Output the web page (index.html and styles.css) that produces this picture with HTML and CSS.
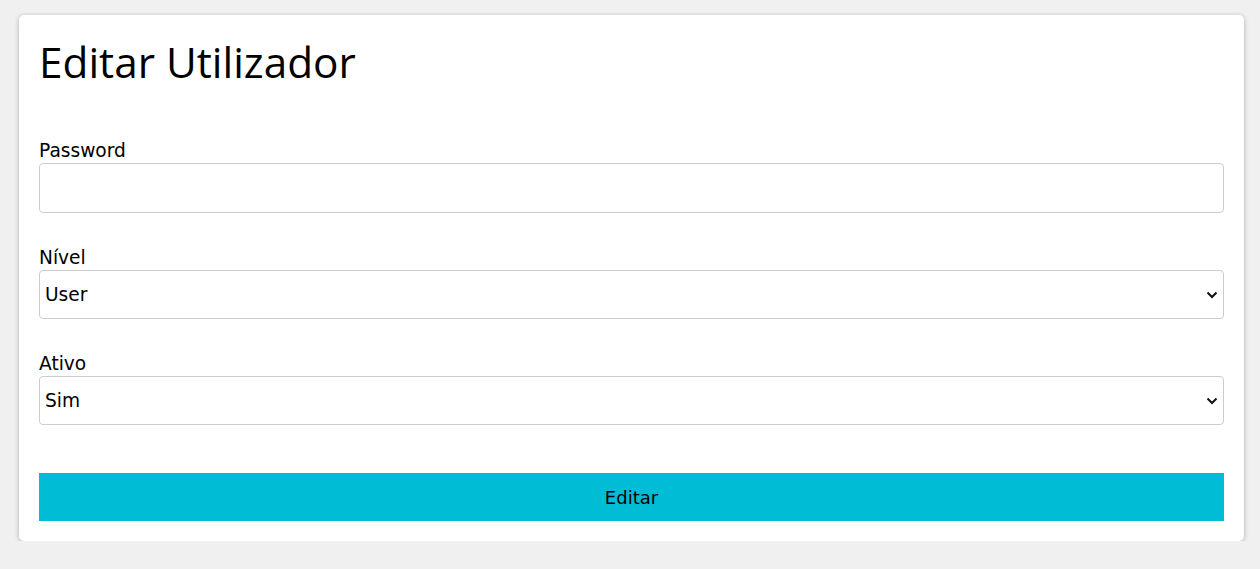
FILE: index.html
```html
<!DOCTYPE html>
<html lang="pt">
<head>
<meta charset="utf-8">
<title>Editar Utilizador</title>
<link rel="stylesheet" href="styles.css">
</head>
<body>
<main class="card">
  <h1 class="title">Editar Utilizador</h1>
  <form class="form">
    <div class="field">
      <label class="label" for="pw">Password</label>
      <input class="control" id="pw" type="password">
    </div>
    <div class="field">
      <label class="label" for="nivel">Nível</label>
      <div class="select-wrap">
        <select class="control select" id="nivel"><option>User</option><option>Admin</option></select>
        <svg class="chev" viewBox="0 0 12 8" width="12" height="8"><path d="M1.5 1.5 L6 6 L10.5 1.5" fill="none" stroke="#111" stroke-width="2"/></svg>
      </div>
    </div>
    <div class="field">
      <label class="label" for="ativo">Ativo</label>
      <div class="select-wrap">
        <select class="control select" id="ativo"><option>Sim</option><option>Não</option></select>
        <svg class="chev" viewBox="0 0 12 8" width="12" height="8"><path d="M1.5 1.5 L6 6 L10.5 1.5" fill="none" stroke="#111" stroke-width="2"/></svg>
      </div>
    </div>
    <button class="btn" type="button">Editar</button>
  </form>
</main>
</body>
</html>
```
FILE: styles.css
```css
html, body {
  margin: 0;
  padding: 0;
  background: #f0f0f0;
}
body {
  padding: 15px 16px 0 19px;
  font-family: "DejaVu Sans", Verdana, sans-serif;
  color: #000;
}
.card {
  background: #fff;
  border-radius: 5px;
  box-shadow: 0 1px 5px rgba(0,0,0,0.28);
  padding: 20px 20px 20px 20px;
}
.title {
  margin: 0;
  font-family: "Open Sans", "Segoe UI", sans-serif;
  font-weight: 400;
  font-size: 42.3px;
  line-height: 54px;
}
.form {
  display: flex;
  flex-direction: column;
  margin-top: 52px;
}
.field {
  display: flex;
  flex-direction: column;
  margin-bottom: 35px;
}
.label {
  font-size: 18.6px;
  line-height: 20px;
  margin-bottom: 2px;
}
.control {
  box-sizing: border-box;
  width: 100%;
  height: 50px;
  border: 1px solid #ccc;
  border-radius: 4px;
  background: #fff;
  font-family: "DejaVu Sans", Verdana, sans-serif;
  font-size: 18.6px;
  padding: 0 5px;
  color: #000;
  outline: none;
}
.select-wrap {
  position: relative;
}
.select {
  height: 49px;
  appearance: none;
  -webkit-appearance: none;
}
.chev {
  position: absolute;
  right: 6px;
  top: 21px;
  pointer-events: none;
}
.btn {
  margin-top: 13px;
  height: 48px;
  border: none;
  background: #00bcd4;
  font-family: "DejaVu Sans", Verdana, sans-serif;
  font-size: 18px;
  color: #000;
  cursor: pointer;
}
```
